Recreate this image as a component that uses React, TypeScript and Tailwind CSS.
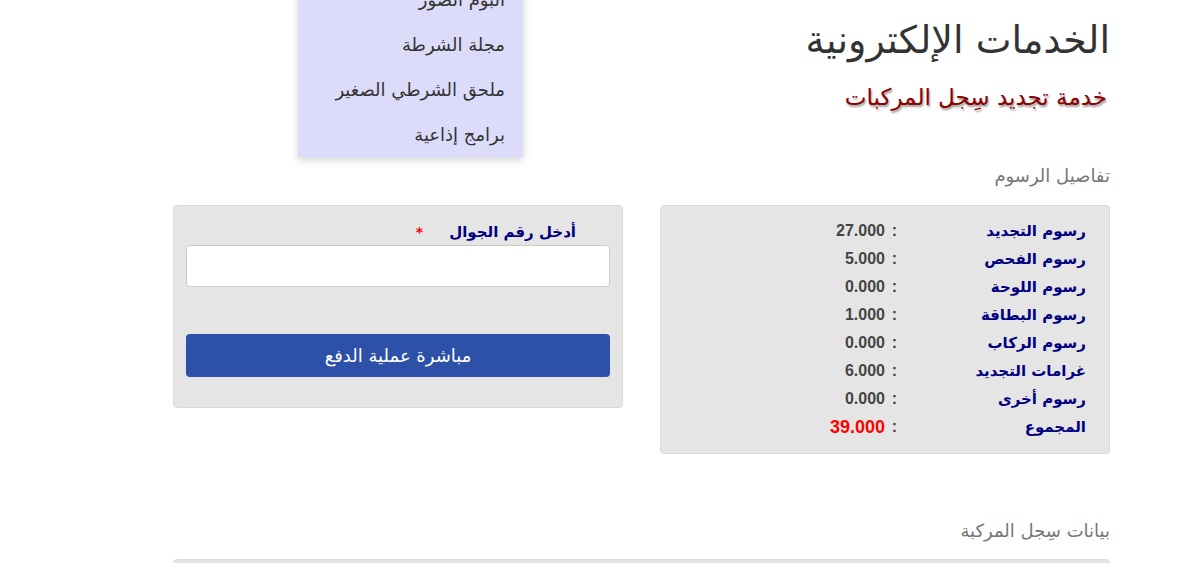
import React from "react";

const ARABIC = "font-['DejaVu_Sans',sans-serif]";

const fees = [
  { label: "رسوم التجديد", value: "27.000" },
  { label: "رسوم الفحص", value: "5.000" },
  { label: "رسوم اللوحة", value: "0.000" },
  { label: "رسوم البطاقة", value: "1.000" },
  { label: "رسوم الركاب", value: "0.000" },
  { label: "غرامات التجديد", value: "6.000" },
  { label: "رسوم أخرى", value: "0.000" },
];

const menuItems = ["ألبوم الصور", "مجلة الشرطة", "ملحق الشرطي الصغير", "برامج إذاعية"];

export default function App() {
  return (
    <div dir="rtl" className={`relative min-h-[563px] overflow-hidden bg-white ${ARABIC}`}>
      {/* dropdown menu open over the page */}
      <ul className="absolute left-[298px] top-[-23px] z-10 w-[225px] bg-[#dcdcfa] shadow-[0_3px_8px_rgba(0,0,0,0.18)]">
        {menuItems.map((item) => (
          <li key={item} className="flex h-[45px] items-center pr-[18px] text-[18px] text-[#333]">
            {item}
          </li>
        ))}
      </ul>

      <div className="mr-[78px] w-[937px] pt-[13px]">
        <h1 className="text-[38px] leading-[54px] text-[#333]">الخدمات الإلكترونية</h1>
        <h2 className="mt-[14px] pr-[3px] text-[23px] leading-[32px] text-[#8b0000] [text-shadow:1px_2px_2px_#999]">
          خدمة تجديد سِجل المركبات
        </h2>

        <h3 className="mt-[50px] text-[18px] leading-[26px] text-[#777]">تفاصيل الرسوم</h3>

        <div className="mt-[16px] flex justify-between">
          {/* fees */}
          <div className="w-[450px] rounded-[4px] border border-[#dadada] bg-[#e5e5e5] pb-[12px] pr-[23px] pt-[11px]">
            {fees.map((f) => (
              <div key={f.label} className="flex h-[28px] items-center">
                <span className="w-[189px] text-[15px] font-bold text-[#000080]">{f.label}</span>
                <span className="w-[12px] font-['Liberation_Sans',sans-serif] text-[16px] font-bold text-[#444]">:</span>
                <span dir="ltr" className="font-['Liberation_Sans',sans-serif] text-[16px] font-bold text-[#444]">
                  {f.value}
                </span>
              </div>
            ))}
            <div className="flex h-[28px] items-center">
              <span className="w-[189px] text-[15px] font-bold text-[#000080]">المجموع</span>
              <span className="w-[12px] font-['Liberation_Sans',sans-serif] text-[16px] font-bold text-[#444]">:</span>
              <span dir="ltr" className="font-['Liberation_Sans',sans-serif] text-[18px] font-bold text-[#ff0000]">
                39.000
              </span>
            </div>
          </div>

          {/* payment */}
          <div className="h-[203px] w-[450px] rounded-[4px] border border-[#dadada] bg-[#e5e5e5] px-[12px] pt-[14px]">
            <label className="flex items-center pr-[34px] text-[15px] font-bold leading-[24px] text-[#000080]">
              أدخل رقم الجوال
              <span className="mr-[26px] text-[14px] text-[#ff0000]">*</span>
            </label>
            <input
              type="text"
              className="mt-[1px] block h-[42px] w-full rounded-[4px] border border-[#ccc] bg-white px-3 outline-none"
            />
            <button className="mt-[47px] flex h-[43px] w-full items-center justify-center rounded-[4px] bg-[#2d50a8] text-[18px] text-white">
              مباشرة عملية الدفع
            </button>
          </div>
        </div>

        <h3 className="mt-[64px] text-[18px] leading-[26px] text-[#777]">بيانات سِجل المركبة</h3>
        <div className="mt-[15px] h-[20px] rounded-t-[4px] border border-[#dadada] bg-[#e5e5e5]" />
      </div>
    </div>
  );
}
